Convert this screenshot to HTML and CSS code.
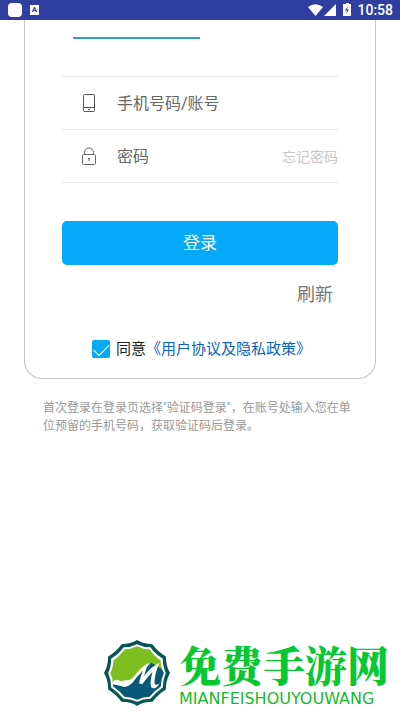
FILE: index.html
```
<!DOCTYPE html>
<html lang="zh-CN">
<head>
  <meta charset="UTF-8">
  <meta name="viewport" content="width=device-width, initial-scale=1">
  <title>登录</title>
  <link rel="stylesheet" href="styles.css">
</head>
<body>
  <header class="status-bar">
    <span class="app-dot"></span>
    <span class="app-badge">A</span>
    <svg class="signals" width="44" height="14" viewBox="0 0 44 14" aria-hidden="true">
      <path d="M0 4Q7.500-1.500 15 4L7.500 13Z" fill="#fff"/>
      <path d="M28 1V13H16Z" fill="#fff"/>
      <path d="M36 1H38V0H41V1H43V13H35V1Z" fill="#fff"/>
      <path d="M40 3L37 7.500H39L38 11L41 6.500H39Z" fill="#303f9f"/>
    </svg>
    <span class="clock">10:58</span>
  </header>

  <main>
    <form class="card">
      <div class="tab-line"></div>

      <div class="fields">
        <div class="field">
          <label for="account" aria-label="手机号码/账号">
            <svg width="16" height="20" viewBox="0 0 16 20" fill="none" stroke="#555">
              <rect x="2.500" y="1.500" width="11" height="17" rx="1"/>
              <path d="M2.500 14.500H13.500M7 16.500H9"/>
            </svg>
          </label>
          <input type="text" id="account" placeholder="手机号码/账号">
        </div>
        <div class="field">
          <label for="password" aria-label="密码">
            <svg width="16" height="20" viewBox="0 0 16 20" fill="none" stroke="#666">
              <rect x="1.500" y="8.500" width="13" height="10" rx="1"/>
              <path d="M3.500 8V6.500A4.500 4.500 0 0 1 12.500 6.500V8M8 12V15M7 12.500H9"/>
            </svg>
          </label>
          <input type="password" id="password" placeholder="密码">
          <a class="forgot" href="#">忘记密码</a>
        </div>
      </div>

      <button type="submit" class="login">登录</button>
      <button type="button" class="refresh">刷新</button>

      <div class="agree">
        <input type="checkbox" id="agree" checked>
        <div><label for="agree">同意</label><a href="#">《用户协议及隐私政策》</a></div>
      </div>
    </form>

    <p class="note">首次登录在登录页选择"验证码登录"，在账号处输入您在单位预留的手机号码，获取验证码后登录。</p>
  </main>

  <footer class="brand">
    <svg width="68" height="68" viewBox="0 0 66 66" aria-hidden="true">
      <path d="M33 1Q39 5 48 5Q53 12 61 17Q61 26 65 33Q61 40 61 49Q53 54 48 61Q39 61 33 65Q27 61 18 61Q13 54 5 49Q5 40 1 33Q5 26 5 17Q13 12 18 5Q27 5 33 1Z" fill="#075653"/>
      <path d="M33 5Q39 8 46 8Q51 15 58 19Q58 27 61 33Q58 40 58 47Q51 52 46 58Q39 58 33 61Q27 58 20 58Q15 52 8 47Q8 40 5 33Q8 27 8 19Q15 15 20 8Q27 8 33 5Z" fill="#fff"/>
      <path d="M33 7Q39 10 45 10Q50 17 56 21Q56 28 59 33Q56 39 56 46Q50 50 45 56Q39 56 33 59Q27 56 21 56Q16 50 10 46Q10 39 7 33Q10 28 10 21Q16 17 21 10Q27 10 33 7Z" fill="#7fbe20"/>
      <path d="M10 44Q26 46 35 35L47 23L57 29L59 33Q56 39 56 46Q50 50 45 56Q39 56 33 59Q27 56 21 56Q17 51 10 46Z" fill="#075879"/>
      <path d="M10 41Q13 38 17 41L22 40Q27 41 32 34Q38 26 45 23Q41 29 40 36Q46 27 55 23Q50 33 50 43Q51 46 55 43Q51 50 47 47Q45 43 48 32Q43 37 38 44L35 43Q36 37 39 30Q33 36 29 42Q23 48 19 46Q14 45 10 44Z" fill="#fff"/>
    </svg>
    <div class="brand-text">
      <div class="brand-name">免费手游网</div>
      <div class="brand-latin">MIANFEISHOUYOUWANG</div>
    </div>
  </footer>
</body>
</html>
```
FILE: styles.css
```
* {
  box-sizing: border-box;
}

body {
  margin: 0;
  min-height: 100vh;
  display: flex;
  flex-direction: column;
  background: #fff;
  font-family: Roboto, "Noto Sans CJK SC", sans-serif;
}

button, input {
  font-family: inherit;
}

a {
  text-decoration: none;
}

.status-bar {
  display: flex;
  align-items: center;
  height: 20px;
  padding: 0 7px 0 8px;
  background: #303f9f;
  color: #fff;
}

.app-dot {
  width: 14px;
  height: 14px;
  border-radius: 4px;
  background: #fff;
}

.app-badge {
  width: 9px;
  height: 10px;
  margin-left: 8px;
  background: #fff;
  color: #303f9f;
  font-size: 8px;
  font-weight: bold;
  line-height: 10px;
  text-align: center;
}

.signals {
  margin-left: auto;
}

.clock {
  margin-left: 5px;
  font-size: 14px;
  font-weight: 500;
}

.card {
  display: flex;
  flex-direction: column;
  margin: 0 24px;
  padding: 17px 37px 19px;
  border: 1px solid #c4c4c4;
  border-top: none;
  border-radius: 0 0 18px 18px;
}

.tab-line {
  width: 46%;
  height: 2px;
  margin-left: 11px;
  background: #2b9fd0;
}

.fields {
  margin-top: 37px;
  border-top: 1px solid #ebebeb;
}

.field {
  display: flex;
  align-items: center;
  height: 53px;
  padding-left: 19px;
  border-bottom: 1px solid #ebebeb;
}

.field label {
  display: flex;
}

.field input {
  flex: 1;
  min-width: 0;
  margin-left: 20px;
  padding: 0;
  border: none;
  outline: none;
  background: none;
  font-size: 16px;
}

.field input::placeholder {
  color: #666;
}

.forgot {
  color: #c8c8c8;
  font-size: 14px;
}

.login {
  height: 44px;
  margin-top: 38px;
  padding: 0 0 4px;
  border: none;
  border-radius: 5px;
  background: #05a9f7;
  color: #fff;
  font-size: 17px;
}

.refresh {
  align-self: flex-end;
  margin: 16px 5px 0 0;
  padding: 0;
  border: none;
  background: none;
  color: #777;
  font-size: 18px;
  line-height: 28px;
}

.agree {
  display: flex;
  align-items: center;
  gap: 6px;
  margin: 30px 0 0 30px;
  color: #222;
  font-size: 15px;
  line-height: 20px;
  white-space: nowrap;
}

.agree a {
  color: #0b5fc4;
}

.agree input {
  appearance: none;
  width: 18px;
  height: 18px;
  margin: 0;
  border-radius: 2px;
  background: #05a9f7;
}

/* white tick */
.agree input:checked::before {
  content: "";
  display: block;
  width: 14px;
  height: 7px;
  margin: 4px 2px;
  border: solid #fff;
  border-width: 0 0 1px 1px;
  transform: rotate(-45deg);
}

.note {
  margin: 20px 40px 0 43px;
  color: #999;
  font-size: 12px;
  line-height: 18px;
}

.brand {
  display: flex;
  align-items: center;
  justify-content: flex-end;
  gap: 8px;
  margin-top: auto;
  padding: 0 11px 3px 0;
}

.brand-name {
  color: #08c832;
  font-family: "Noto Serif CJK SC", "Noto Sans CJK SC", serif;
  font-size: 42px;
  font-weight: 900;
  line-height: 52px;
}

.brand-latin {
  color: #18b92c;
  font-family: "DejaVu Sans", sans-serif;
  font-size: 16px;
  line-height: 18px;
}
```
